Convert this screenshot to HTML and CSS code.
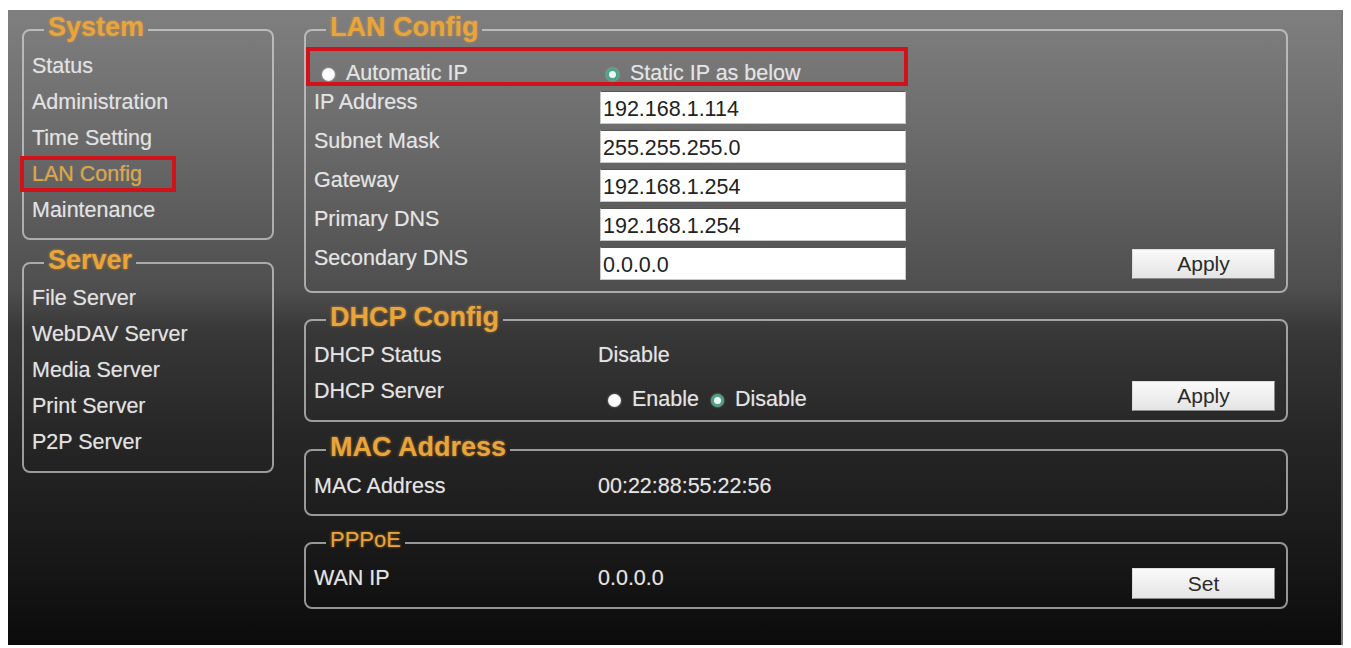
FILE: index.html
```html
<!DOCTYPE html>
<html lang="en">
<head>
    <meta charset="UTF-8">
    <title>LAN Config</title>
    <link rel="stylesheet" href="styles.css">
</head>
<body>
    <div class="panel">

        <!-- Menu -->
        <div class="sidebar">
            <fieldset class="box menu system">
                <legend>System</legend>
                <div class="menu-item">Status</div>
                <div class="menu-item">Administration</div>
                <div class="menu-item">Time Setting</div>
                <div class="menu-item active">LAN Config</div>
                <div class="menu-item">Maintenance</div>
            </fieldset>
            <fieldset class="box menu server">
                <legend>Server</legend>
                <div class="menu-item">File Server</div>
                <div class="menu-item">WebDAV Server</div>
                <div class="menu-item">Media Server</div>
                <div class="menu-item">Print Server</div>
                <div class="menu-item">P2P Server</div>
            </fieldset>
        </div>

        <div class="main">
            <!-- LAN Config -->
            <fieldset class="box lan">
                <legend>LAN Config</legend>
                <div class="radio-row">
                    <label class="option first"><span class="dot"></span>Automatic IP</label>
                    <label class="option"><span class="dot on"></span>Static IP as below</label>
                </div>
                <div class="row">
                    <span class="label">IP Address</span>
                    <input type="text" class="field" value="192.168.1.114">
                </div>
                <div class="row">
                    <span class="label">Subnet Mask</span>
                    <input type="text" class="field" value="255.255.255.0">
                </div>
                <div class="row">
                    <span class="label">Gateway</span>
                    <input type="text" class="field" value="192.168.1.254">
                </div>
                <div class="row">
                    <span class="label">Primary DNS</span>
                    <input type="text" class="field" value="192.168.1.254">
                </div>
                <div class="row">
                    <span class="label">Secondary DNS</span>
                    <input type="text" class="field" value="0.0.0.0">
                    <button type="button" class="btn btn-lan">Apply</button>
                </div>
            </fieldset>

            <!-- DHCP Config -->
            <fieldset class="box dhcp">
                <legend>DHCP Config</legend>
                <div class="row info">
                    <span class="label">DHCP Status</span>
                    <span class="value">Disable</span>
                </div>
                <div class="row info">
                    <span class="label">DHCP Server</span>
                    <span class="radios">
                        <label class="option"><span class="dot"></span>Enable</label>
                        <label class="option"><span class="dot on"></span>Disable</label>
                    </span>
                    <button type="button" class="btn">Apply</button>
                </div>
            </fieldset>

            <!-- MAC Address -->
            <fieldset class="box mac">
                <legend>MAC Address</legend>
                <div class="row text-row">
                    <span class="label">MAC Address</span>
                    <span class="value">00:22:88:55:22:56</span>
                </div>
            </fieldset>

            <!-- PPPoE -->
            <fieldset class="box pppoe">
                <legend>PPPoE</legend>
                <div class="row info">
                    <span class="label">WAN IP</span>
                    <span class="value">0.0.0.0</span>
                    <button type="button" class="btn">Set</button>
                </div>
            </fieldset>
        </div>
    </div>
</body>
</html>
```

FILE: styles.css
```css
body {
    margin: 0;
    background-color: #fff;
    font-family: "Liberation Sans", Arial, sans-serif;
}

.panel {
    display: flex;
    gap: 30px;
    width: 1335px;
    height: 635px;
    margin: 10px 0 0 8px;
    padding: 3px 0 0 14px;
    box-sizing: border-box;
    border-right: 2px solid #777;
    background: linear-gradient(to bottom, #7f7f7f 0, #6c6c6c 120px, #4e4e4e 280px, #383838 320px, #272727 420px, #161616 560px, #0b0b0b 635px);
}

.sidebar {
    width: 252px;
}

.main {
    width: 984px;
}

/* Cajas con titulo */
.box {
    margin: 0;
    padding: 0 11px 0 8px;
    min-width: 0;
    border: 2px solid rgba(220, 220, 220, 0.65);
    border-radius: 8px;
}

.box legend {
    margin-left: 12px;
    padding: 0 4px 6px;
    font-size: 27px;
    font-weight: bold;
    line-height: 28px;
    color: #e8a53c;
    text-shadow: 0 0 3px rgba(255, 160, 40, 0.6);
}

.menu-item {
    height: 36px;
    line-height: 36px;
    font-size: 21.5px;
    color: #e2e2e2;
    white-space: nowrap;
    text-shadow: 0 0 1px rgba(255, 255, 255, 0.35);
}

.menu-item.active {
    width: 156px;
    margin-left: -12px;
    padding-left: 8px;
    box-sizing: border-box;
    border: 4px solid #d0121a;
    line-height: 28px;
    color: #dfa440;
}

.system {
    padding-top: 1px;
    padding-bottom: 10px;
}

.server {
    margin-top: 6px;
    padding-bottom: 11px;
}

/* Filas */
.row {
    display: flex;
    align-items: flex-start;
    height: 39px;
}

.label {
    width: 284px;
    flex-shrink: 0;
    font-size: 21.5px;
    line-height: 22px;
    color: #e4e4e4;
    white-space: nowrap;
    text-shadow: 0 0 1px rgba(255, 255, 255, 0.35);
}

.value {
    font-size: 21.5px;
    line-height: 22px;
    color: #e4e4e4;
    text-shadow: 0 0 1px rgba(255, 255, 255, 0.35);
}

.field {
    flex-shrink: 0;
    width: 306px;
    height: 33px;
    margin: 0 0 0 2px;
    padding: 3px 0 0 2px;
    box-sizing: border-box;
    border: 1px solid #c8c8c8;
    border-top-color: #555;
    background-color: #fff;
    font-family: inherit;
    font-size: 21.5px;
    color: #222;
}

.radio-row {
    display: flex;
    align-items: flex-start;
    width: 602px;
    height: 39px;
    margin: 0 0 5px -8px;
    padding: 11px 0 0 12px;
    box-sizing: border-box;
    border: 4px solid #d0121a;
}

.option {
    display: inline-flex;
    align-items: center;
    font-size: 21.5px;
    line-height: 22px;
    color: #e4e4e4;
    white-space: nowrap;
    text-shadow: 0 0 1px rgba(255, 255, 255, 0.35);
}

.option.first {
    width: 284px;
}

.dot {
    display: inline-block;
    flex-shrink: 0;
    width: 13px;
    height: 13px;
    margin: 2px 11px 0 0;
    border-radius: 50%;
    box-sizing: border-box;
    background: radial-gradient(circle at 45% 40%, #fff 0, #fafafa 60%, #d8d8d8 100%);
    box-shadow: 0 0 2px rgba(255, 255, 255, 0.6);
}

.dot.on {
    border: 3px solid #4aa488;
    background: #f6f6f6;
}

.radios {
    display: flex;
    gap: 12px;
    margin-top: 8px;
    padding-left: 10px;
}

.btn {
    flex-shrink: 0;
    width: 143px;
    height: 30px;
    margin: 1px 0 0 auto;
    border: 1px solid #8a8a8a;
    border-top-color: #ddd;
    border-left-color: #ddd;
    background: linear-gradient(to bottom, #fafafa, #e4e4e4);
    font-family: inherit;
    font-size: 21px;
    color: #2a2a2a;
}

.btn-lan {
    margin-top: 2px;
}

.lan {
    padding-bottom: 5px;
}

.dhcp {
    margin-top: 10px;
    padding-top: 7px;
    padding-bottom: 4px;
}

.row.info {
    height: 36px;
}

.mac {
    margin-top: 11px;
    padding-top: 8px;
    padding-bottom: 17px;
}

.row.text-row {
    height: 22px;
}

.pppoe {
    margin-top: 10px;
    padding-top: 7px;
    padding-bottom: 4px;
}

.pppoe legend {
    font-size: 22px;
    font-weight: normal;
}

.pppoe .btn {
    height: 31px;
}
```
